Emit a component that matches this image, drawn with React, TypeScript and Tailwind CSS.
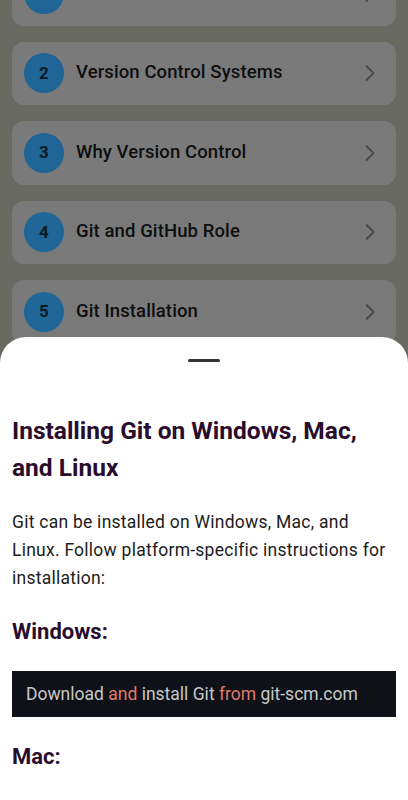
import { ChevronRight } from "lucide-react";

const topics = [
  { n: 1, title: "Introduction to Git" },
  { n: 2, title: "Version Control Systems" },
  { n: 3, title: "Why Version Control" },
  { n: 4, title: "Git and GitHub Role" },
  { n: 5, title: "Git Installation" },
];

const TopicCard = ({ n, title }: { n: number; title: string }) => (
  <div className="flex h-[63.5px] shrink-0 items-center rounded-[12px] bg-[#7a7a7a] px-3">
    <div className="flex h-10 w-10 items-center justify-center rounded-full bg-[#1f6595] text-[17px] font-bold text-[#0d1a24]">
      {n}
    </div>
    <span className="ml-3 flex-1 text-[18.5px] font-medium tracking-[0.1px] text-[#0e0e0e]">{title}</span>
    <ChevronRight className="h-7 w-7 text-[#4a4a4a]" strokeWidth={1.6} />
  </div>
);

export default function App() {
  return (
    <div
      className="relative h-[800px] w-[408px] overflow-hidden bg-[#686960]"
      style={{ fontFamily: "Roboto, 'Noto Sans', sans-serif" }}
    >
      <div className="-mt-[38px] flex flex-col gap-4 px-3">
        {topics.map((t) => (
          <TopicCard key={t.n} n={t.n} title={t.title} />
        ))}
      </div>

      {/* bottom sheet */}
      <div className="absolute inset-x-0 top-[337px] bottom-0 rounded-t-[26px] bg-white px-3">
        <div className="mx-auto mt-[22px] h-[3px] w-8 rounded-full bg-[#333333]" />
        <h2 className="mt-[50px] text-[24.5px] font-bold leading-[37px] text-[#2a0d2c]">
          Installing Git on Windows, Mac, and Linux
        </h2>
        <p className="mt-[22px] text-[17.5px] leading-[28px] tracking-[0.25px] text-[#1c1c1c]">
          Git can be installed on Windows, Mac, and Linux. Follow platform-specific instructions for
          installation:
        </p>
        <h3 className="mt-[26px] text-[22px] font-bold leading-[28px] text-[#2a0d2c]">Windows:</h3>
        <div className="mt-[25px] flex h-[46px] items-center whitespace-pre bg-[#0e1117] px-[14px] text-[17.5px] text-[#c8c8c8]">
          Download <span className="text-[#e07a6c]">and</span> install Git <span className="text-[#e07a6c]">from</span> git-scm.com
        </div>
        <h3 className="mt-[26px] text-[22px] font-bold leading-[28px] text-[#2a0d2c]">Mac:</h3>
      </div>
    </div>
  );
}
